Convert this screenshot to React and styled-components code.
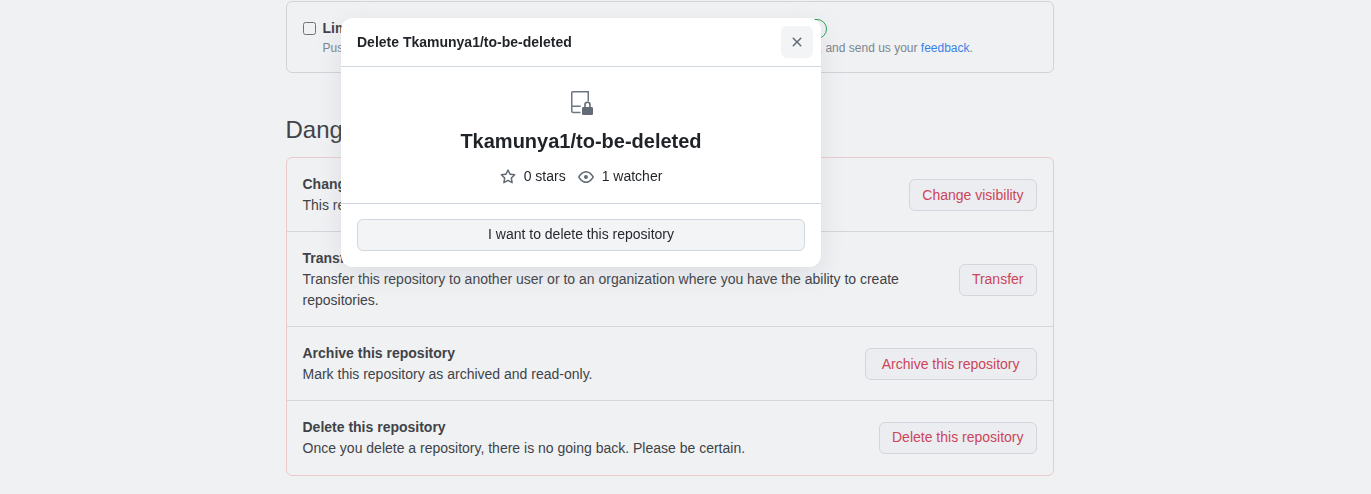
import React from "react";
import styled, { createGlobalStyle } from "styled-components";

const GlobalStyle = createGlobalStyle`
  html, body {
    margin: 0;
    height: 100%;
    background: #f0f1f3;
    overflow: hidden;
  }
  body {
    font-family: "Liberation Sans", Arial, sans-serif;
    font-size: 14px;
    line-height: 21px;
    color: #3f4348;
  }
`;

const Page = styled.div`
  width: 768px;
  margin-left: 285.5px;
  padding-top: 1px;
`;

const PushBox = styled.section`
  display: flex;
  gap: 7px;
  height: 72px;
  box-sizing: border-box;
  padding: 16px;
  border: 1px solid #cfd4da;
  border-radius: 6px;
`;

const Checkbox = styled.span`
  flex: none;
  width: 13px;
  height: 13px;
  margin-top: 4px;
  box-sizing: border-box;
  border: 1px solid #6f7479;
  border-radius: 2.5px;
`;

const PushTitle = styled.div`
  font-weight: 700;
  line-height: 21px;
  white-space: nowrap;
`;

const BetaLabel = styled.span`
  display: inline-block;
  margin-left: 14px;
  padding: 0 7px;
  border: 1px solid #2f9e57;
  border-radius: 10px;
  font-size: 12px;
  font-weight: 500;
  line-height: 18px;
  color: #2f9e57;
`;

const PushNote = styled.div`
  font-size: 12px;
  line-height: 18px;
  color: #7d858e;
  white-space: nowrap;
`;

const FeedbackLink = styled.a`
  color: #3b82e6;
`;

const Heading = styled.h2`
  margin: 39px 0 9px;
  font-size: 24px;
  font-weight: 400;
  line-height: 36px;
  color: #3f4348;
`;

const DangerBox = styled.section`
  border: 1px solid #ebcacd;
  border-radius: 6px;
`;

const DangerButton = styled.button`
  flex: none;
  height: 32px;
  padding: 0 ${(props) => (props.$wide ? "16px" : "12px")};
  border: 1px solid #d2d5db;
  border-radius: 6px;
  background: #ebedf1;
  color: #cc455a;
  font: inherit;
`;

const Row = styled.div`
  display: flex;
  align-items: center;
  justify-content: space-between;
  gap: 16px;
  padding: 16px 16px 15px;
  border-top: ${(props) => (props.$first ? "none" : "1px solid #d2d5da")};

  &:last-child {
    padding-bottom: 16px;
  }

  &:last-child ${DangerButton} {
    padding-bottom: 2px;
  }
`;

const RowTitle = styled.div`
  font-weight: 700;
`;

const Modal = styled.div`
  position: fixed;
  top: 18px;
  left: 341px;
  width: 480px;
  border-radius: 12px;
  background: #fff;
  color: #1f2328;
  box-shadow: 0 8px 24px rgba(140, 149, 159, 0.2);
`;

const ModalHeader = styled.header`
  display: flex;
  align-items: center;
  justify-content: space-between;
  height: 48px;
  padding: 0 8px 0 16px;
  border-bottom: 1px solid #d0d7de;
`;

const ModalTitle = styled.h1`
  margin: 0;
  font-size: 14px;
  font-weight: 700;
`;

const CloseButton = styled.button`
  display: flex;
  align-items: center;
  justify-content: center;
  width: 32px;
  height: 32px;
  padding: 0;
  border: none;
  border-radius: 6px;
  background: #f3f4f6;
  color: #636c76;
`;

const ModalBody = styled.div`
  display: flex;
  flex-direction: column;
  align-items: center;
  height: 137px;
  box-sizing: border-box;
  padding-top: 24px;
  border-bottom: 1px solid #d0d7de;
`;

const RepoName = styled.div`
  margin-top: 11px;
  font-size: 20px;
  font-weight: 700;
  line-height: 30px;
`;

const Stats = styled.div`
  display: flex;
  align-items: center;
  margin-top: 10px;
`;

const Stat = styled.span`
  display: flex;
  align-items: center;
  gap: 8px;
  margin-left: ${(props) => (props.$spaced ? "12px" : "0")};
  color: #1f2328;

  svg {
    color: #636c76;
  }
`;

const ModalFooter = styled.div`
  padding: 15px 16px 16px;
`;

const ConfirmButton = styled.button`
  display: block;
  width: 100%;
  height: 32px;
  padding: 0 16px 2px;
  border: 1px solid #d0d7de;
  border-radius: 6px;
  background: #f3f4f6;
  color: #25292e;
  font: inherit;
`;

const Octicon = ({ d, size = 16 }) => (
  <svg width={size} height={size} viewBox="0 0 16 16" fill="currentColor" aria-hidden="true">
    <path d={d} />
  </svg>
);

const X_PATH =
  "M3.72 3.72a.75.75 0 0 1 1.06 0L8 6.94l3.22-3.22a.749.749 0 0 1 1.275.326.749.749 0 0 1-.215.734L9.06 8l3.22 3.22a.749.749 0 0 1-.326 1.275.749.749 0 0 1-.734-.215L8 9.06l-3.22 3.22a.751.751 0 0 1-1.042-.018.751.751 0 0 1-.018-1.042L6.94 8 3.72 4.78a.75.75 0 0 1 0-1.06Z";
const STAR_PATH =
  "M8 .25a.75.75 0 0 1 .673.418l1.882 3.815 4.21.612a.75.75 0 0 1 .416 1.279l-3.046 2.97.719 4.192a.751.751 0 0 1-1.088.791L8 12.347l-3.766 1.98a.75.75 0 0 1-1.088-.79l.72-4.194L.818 6.374a.75.75 0 0 1 .416-1.28l4.21-.611L7.327.668A.75.75 0 0 1 8 .25Zm0 2.445L6.615 5.5a.75.75 0 0 1-.564.41l-3.097.45 2.24 2.184a.75.75 0 0 1 .216.664l-.528 3.084 2.769-1.456a.75.75 0 0 1 .698 0l2.77 1.456-.53-3.084a.75.75 0 0 1 .216-.664l2.24-2.183-3.096-.45a.75.75 0 0 1-.564-.41L8 2.694Z";
const EYE_PATH =
  "M8 2c1.981 0 3.671.992 4.933 2.078 1.27 1.091 2.187 2.345 2.637 3.023a1.62 1.62 0 0 1 0 1.798c-.45.678-1.367 1.932-2.637 3.023C11.67 13.008 9.981 14 8 14c-1.981 0-3.671-.992-4.933-2.078C1.797 10.83.88 9.576.43 8.898a1.62 1.62 0 0 1 0-1.798c.45-.677 1.367-1.931 2.637-3.022C4.33 2.992 6.019 2 8 2ZM1.679 7.932a.12.12 0 0 0 0 .136c.411.622 1.241 1.75 2.366 2.717C5.176 11.758 6.527 12.5 8 12.5c1.473 0 2.825-.742 3.955-1.715 1.124-.967 1.954-2.096 2.366-2.717a.12.12 0 0 0 0-.136c-.412-.621-1.242-1.75-2.366-2.717C10.824 4.242 9.473 3.5 8 3.5c-1.473 0-2.825.742-3.955 1.715-1.124.967-1.954 2.096-2.366 2.717ZM8 10a2 2 0 1 1-.001-3.999A2 2 0 0 1 8 10Z";

const RepoLockedIcon = () => (
  <svg width="24" height="24" viewBox="0 0 24 24" fill="none" aria-hidden="true">
    <path
      d="M11.5 21.5H4.3c-1 0-1.55-.6-1.55-1.5V1.55c0-.5.3-.8.8-.8H19.25v9.5M2.75 15.25h9"
      stroke="#6e7781"
      strokeWidth="1.5"
    />
    <path
      d="M15.2 16v-2.2a3.3 3.3 0 0 1 6.6 0V16h.9c.7 0 1.3.6 1.3 1.3v5.4c0 .7-.6 1.3-1.3 1.3h-8.4c-.7 0-1.3-.6-1.3-1.3v-5.4c0-.7.6-1.3 1.3-1.3Zm1.6 0h3.4v-2.2a1.7 1.7 0 0 0-3.4 0Z"
      fill="#636c76"
      fillRule="evenodd"
    />
  </svg>
);

const dangerRows = [
  {
    title: "Change repository visibility",
    text: "This repository is currently private.",
    action: "Change visibility",
  },
  {
    title: "Transfer ownership",
    text: "Transfer this repository to another user or to an organization where you have the ability to create repositories.",
    action: "Transfer",
  },
  {
    title: "Archive this repository",
    text: "Mark this repository as archived and read-only.",
    action: "Archive this repository",
    wide: true,
  },
  {
    title: "Delete this repository",
    text: "Once you delete a repository, there is no going back. Please be certain.",
    action: "Delete this repository",
  },
];

export default function App() {
  return (
    <>
      <GlobalStyle />
      <Page>
        <PushBox>
          <Checkbox />
          <div>
            <PushTitle>
              Limit how many branches and tags can be updated in a single push
              <BetaLabel>Beta</BetaLabel>
            </PushTitle>
            <PushNote>
              Pushes will be rejected if they attempt to update more than this. Learn more about this setting, and send us
              your <FeedbackLink>feedback</FeedbackLink>.
            </PushNote>
          </div>
        </PushBox>
        <Heading>Danger Zone</Heading>
        <DangerBox>
          {dangerRows.map((row, i) => (
            <Row key={row.title} $first={i === 0}>
              <div>
                <RowTitle>{row.title}</RowTitle>
                <div>{row.text}</div>
              </div>
              <DangerButton $wide={row.wide}>{row.action}</DangerButton>
            </Row>
          ))}
        </DangerBox>
      </Page>
      <Modal>
        <ModalHeader>
          <ModalTitle>Delete Tkamunya1/to-be-deleted</ModalTitle>
          <CloseButton>
            <Octicon d={X_PATH} />
          </CloseButton>
        </ModalHeader>
        <ModalBody>
          <RepoLockedIcon />
          <RepoName>Tkamunya1/to-be-deleted</RepoName>
          <Stats>
            <Stat>
              <Octicon d={STAR_PATH} />0 stars
            </Stat>
            <Stat $spaced>
              <Octicon d={EYE_PATH} />1 watcher
            </Stat>
          </Stats>
        </ModalBody>
        <ModalFooter>
          <ConfirmButton>I want to delete this repository</ConfirmButton>
        </ModalFooter>
      </Modal>
    </>
  );
}
